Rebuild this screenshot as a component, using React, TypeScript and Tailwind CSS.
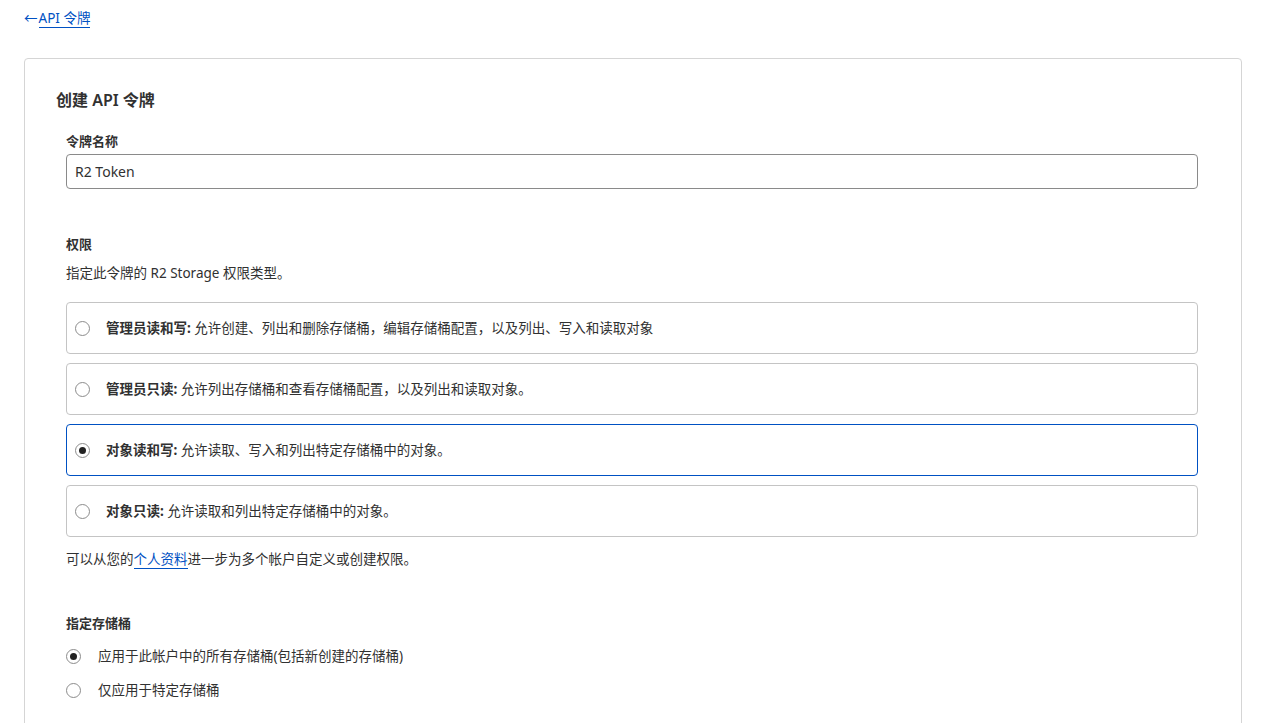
import { useState } from "react";

const PERMISSIONS = [
  { id: "admin-rw", title: "管理员读和写:", desc: "允许创建、列出和删除存储桶，编辑存储桶配置，以及列出、写入和读取对象" },
  { id: "admin-r", title: "管理员只读:", desc: "允许列出存储桶和查看存储桶配置，以及列出和读取对象。" },
  { id: "obj-rw", title: "对象读和写:", desc: "允许读取、写入和列出特定存储桶中的对象。" },
  { id: "obj-r", title: "对象只读:", desc: "允许读取和列出特定存储桶中的对象。" },
];

function Radio({ checked }: { checked: boolean }) {
  return (
    <span className="flex h-[15px] w-[15px] shrink-0 items-center justify-center rounded-full border border-[#8c8c8c] bg-white">
      {checked && <span className="h-[7px] w-[7px] rounded-full bg-[#222]" />}
    </span>
  );
}

export default function App() {
  const [perm, setPerm] = useState("obj-rw");
  const [scope, setScope] = useState("all");

  return (
    <div
      className="min-h-screen bg-white text-[13.5px] text-[#313131]"
      style={{ fontFamily: '"Noto Sans", "Noto Sans CJK SC", sans-serif' }}
    >
      <div className="px-6 pt-[8px]">
        <a href="#" className="inline-flex items-center text-[13.5px] leading-[20px] text-[#0051c3]">
          <span>←</span>
          <span className="ml-[1px] border-b border-[#0051c3] leading-[18px]">API 令牌</span>
        </a>
      </div>

      <div className="ml-6 mr-[38px] mt-[30px] rounded-[4px] border border-[#d5d5d5] pb-10 pl-[31px] pr-[43px] pt-[29px]">
        <h1 className="text-[16px] font-semibold leading-[24px]">创建 API 令牌</h1>

        <div className="pl-[10px]">
          <label className="mt-[19px] block text-[13px] font-bold leading-[20px]">令牌名称</label>
          <input
            defaultValue="R2 Token"
            className="mt-[3px] block h-[35px] w-full rounded-[4px] border border-[#8a8a8a] px-2 text-[14px] text-[#313131] outline-none"
          />

          <h2 className="mt-[45px] text-[13px] font-bold leading-[20px]">权限</h2>
          <p className="mt-[9px] leading-[20px]">指定此令牌的 R2 Storage 权限类型。</p>

          <div className="mt-[19px] flex flex-col gap-[9px]">
            {PERMISSIONS.map(p => {
              const active = perm === p.id;
              return (
                <button
                  key={p.id}
                  type="button"
                  onClick={() => setPerm(p.id)}
                  className={`flex h-[52px] items-center gap-4 rounded-[4px] border pl-2 text-left ${
                    active ? "border-[#0051c3]" : "border-[#c4c4c4]"
                  }`}
                >
                  <Radio checked={active} />
                  <span className="leading-[20px]">
                    <span className="font-bold">{p.title}</span> {p.desc}
                  </span>
                </button>
              );
            })}
          </div>

          <p className="mt-[12px] leading-[20px]">
            可以从您的
            <a href="#" className="border-b border-[#0051c3] text-[#0051c3]">个人资料</a>
            进一步为多个帐户自定义或创建权限。
          </p>

          <h2 className="mt-[44px] text-[13px] font-bold leading-[20px]">指定存储桶</h2>
          <div className="mt-[13px] flex flex-col gap-[14px]">
            <button type="button" onClick={() => setScope("all")} className="flex items-center gap-[17px] text-left leading-[20px]">
              <Radio checked={scope === "all"} />
              <span>应用于此帐户中的所有存储桶(包括新创建的存储桶)</span>
            </button>
            <button type="button" onClick={() => setScope("some")} className="flex items-center gap-[17px] text-left leading-[20px]">
              <Radio checked={scope === "some"} />
              <span>仅应用于特定存储桶</span>
            </button>
          </div>
        </div>
      </div>
    </div>
  );
}
